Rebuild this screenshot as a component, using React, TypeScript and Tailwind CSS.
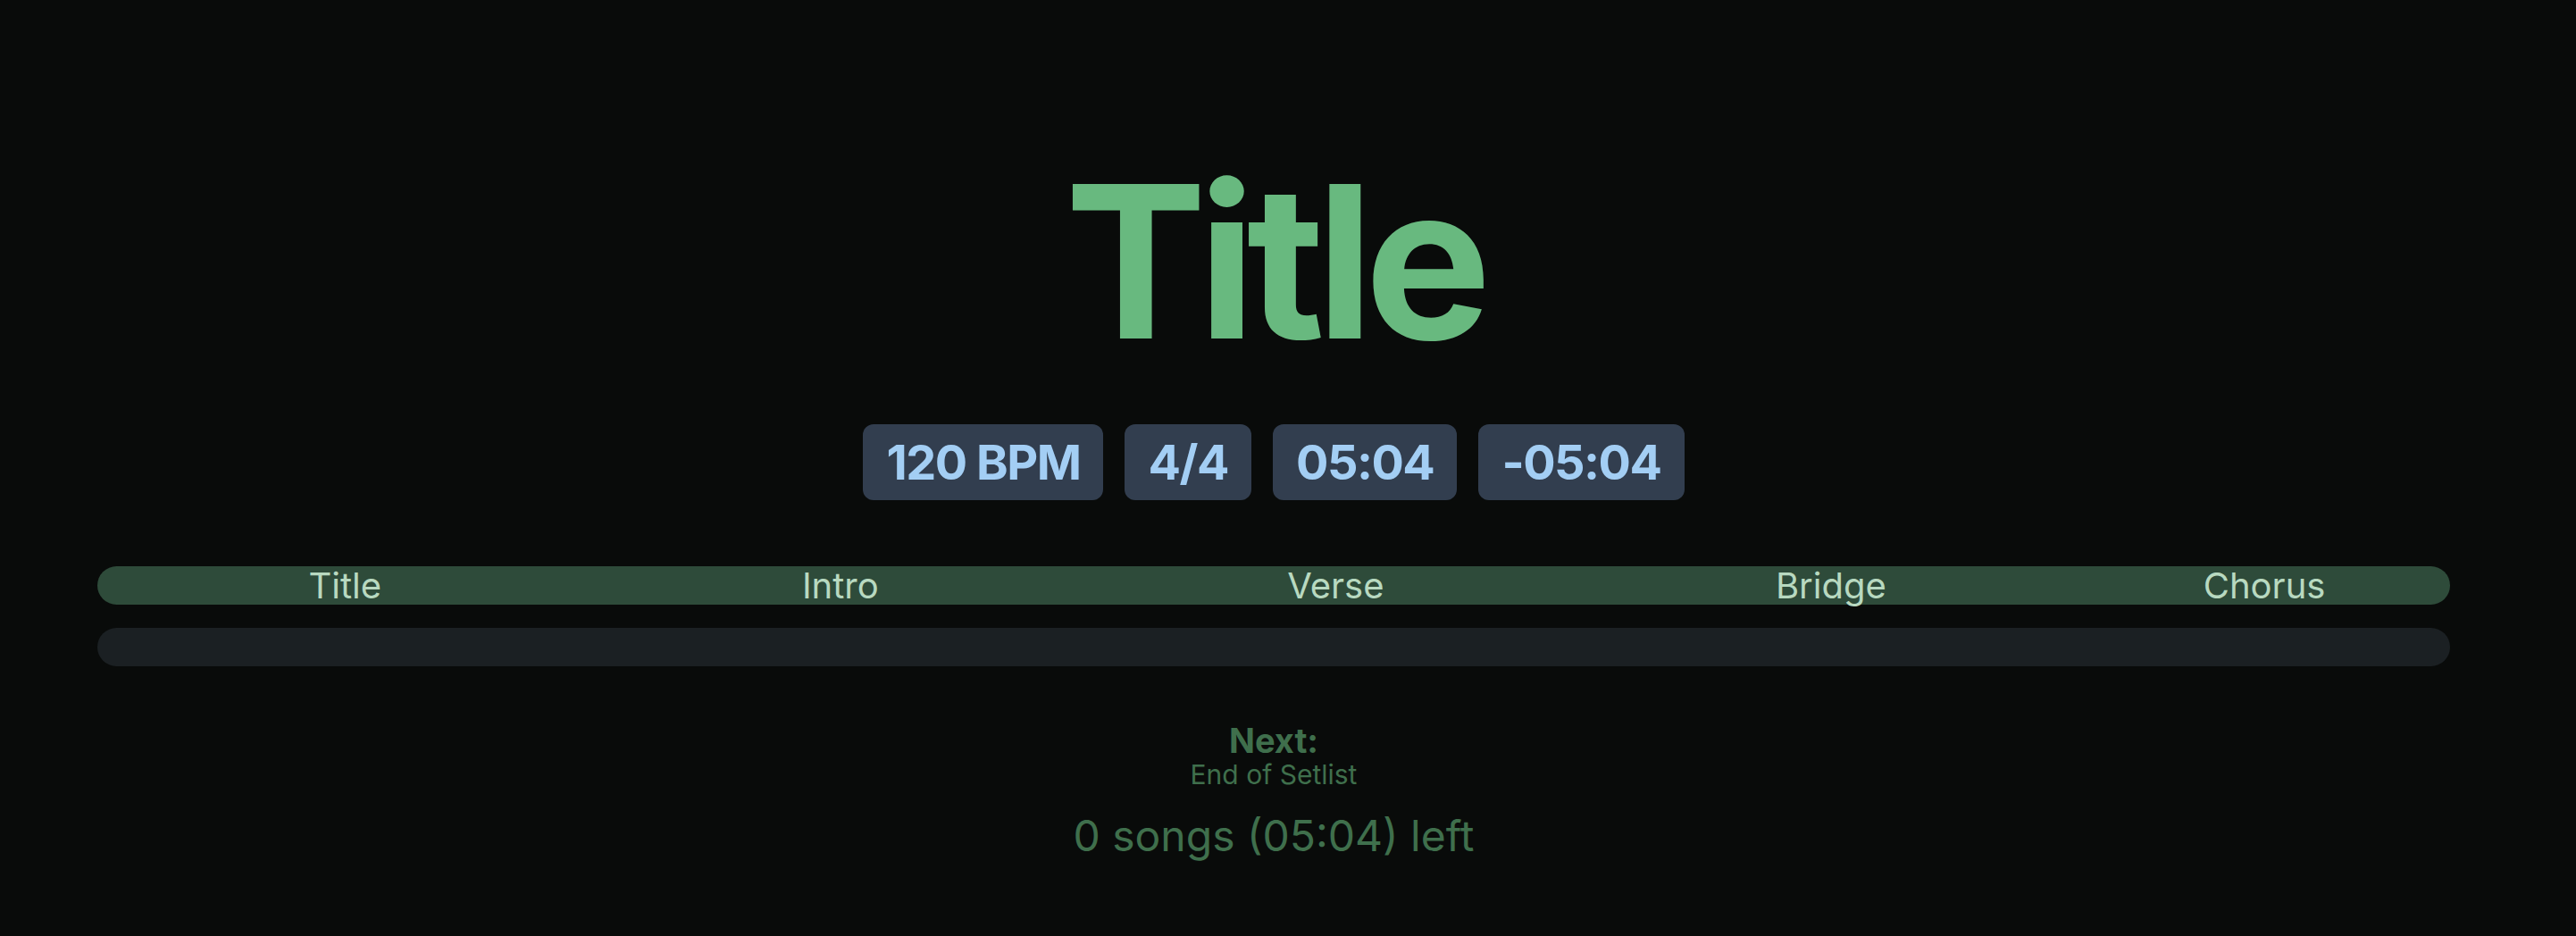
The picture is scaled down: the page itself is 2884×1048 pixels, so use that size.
import React from 'react';

type Section = { name: string; beats: number };

const sections: Section[] = [
    { name: 'Title', beats: 4 },
    { name: 'Intro', beats: 4 },
    { name: 'Verse', beats: 4 },
    { name: 'Bridge', beats: 4 },
    { name: 'Chorus', beats: 3 },
];

const Badge: React.FC<{ children: React.ReactNode }> = ({ children }) => (
    <div className="bg-[#323e4f] text-[#a3cef4] rounded-[12px] px-[26px] py-[10px] text-[54px] leading-[65px] font-bold tracking-[-1.5px]">
        {children}
    </div>
);

const App: React.FC = () => {
    return (
        <div className="min-h-screen bg-[#090b0a] font-['Inter',sans-serif] pr-[32px]">
            <div className="flex flex-col items-center pt-[173px]">
                <h1 className="text-[238px] leading-none font-bold tracking-[-10px] text-[#68b97f]">Title</h1>

                <div className="flex gap-[24px] mt-[64px]">
                    <Badge>120 BPM</Badge>
                    <Badge>4/4</Badge>
                    <Badge>05:04</Badge>
                    <Badge>-05:04</Badge>
                </div>
            </div>

            <div className="px-[109px] mt-[74px] flex flex-col gap-[26px]">
                <div className="h-[43px] rounded-full bg-[#2e4b3a] flex">
                    {sections.map((s) => (
                        <div
                            key={s.name}
                            className="flex items-center justify-center text-[40px] leading-[43px] text-[#b8d9c0]"
                            style={{ flexGrow: s.beats, flexBasis: 0 }}
                        >
                            {s.name}
                        </div>
                    ))}
                </div>
                <div className="h-[43px] rounded-full bg-[#1b2023]" />
            </div>

            <div className="flex flex-col items-center text-[#3f6f4c] mt-[62px]">
                <div className="text-[38px] leading-[42px] font-bold">Next:</div>
                <div className="text-[30px] leading-[34px]">End of Setlist</div>
                <div className="text-[48px] leading-[64px] mt-[20px]">0 songs (05:04) left</div>
            </div>
        </div>
    );
};

export default App;
